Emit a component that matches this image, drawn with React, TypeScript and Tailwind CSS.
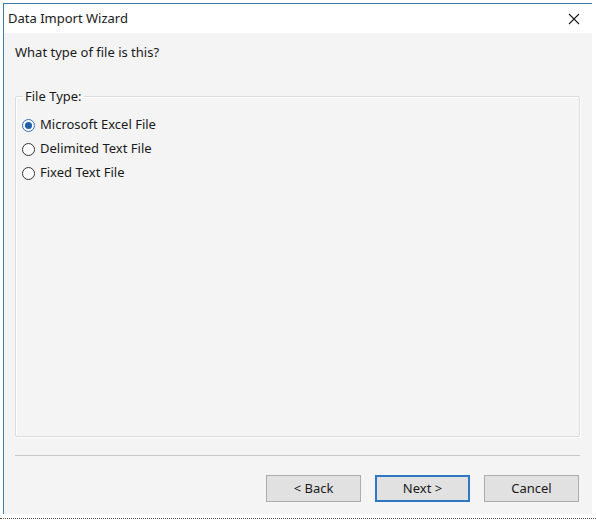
import { useState } from 'react';

const options = ['Microsoft Excel File', 'Delimited Text File', 'Fixed Text File'];

function Radio({ checked }: { checked: boolean }) {
  return (
    <span
      className={
        'flex h-[13px] w-[13px] shrink-0 items-center justify-center rounded-full border bg-white ' +
        (checked ? 'border-[#2f6fb8]' : 'border-[#333333]')
      }
    >
      {checked && <span className="h-[7px] w-[7px] rounded-full bg-[#1f5fa6]" />}
    </span>
  );
}

export default function App() {
  const [selected, setSelected] = useState(0);

  return (
    <div
      className="h-[525px] w-[596px] bg-white text-[13px] text-[#1a1a1a]"
      style={{ fontFamily: '"Noto Sans", "Noto Sans CJK KR", sans-serif' }}
    >
      <div className="border-b border-dotted border-[#555555] pb-[4px]">
        <div className="ml-[3px] mt-[3px] flex h-[511px] w-[589px] flex-col border-l border-t border-[#3c7fb1]">
          {/* Title bar */}
          <div className="flex h-[29px] items-center justify-between bg-white pl-[4px] pr-[12px]">
            <span className="text-[13px] leading-none">Data Import Wizard</span>
            <svg width="12" height="12" viewBox="0 0 12 12" className="text-[#1a1a1a]">
              <path d="M1 1L11 11M11 1L1 11" stroke="currentColor" strokeWidth="1.1" />
            </svg>
          </div>

          {/* Body */}
          <div className="flex flex-1 flex-col bg-[#f4f4f4] pl-[11px] pr-[12px]">
            <p className="mt-[11px] text-[13px] leading-[16px]">What type of file is this?</p>

            <fieldset className="mt-[29px] h-[348px] rounded-[2px] border border-[#dcdcdc] pl-[6px] pt-[10px] shadow-[inset_1px_1px_0_#ffffff,1px_1px_0_#ffffff]">
              <legend className="ml-[1px] px-[2px] text-[13px] leading-[14px]">File Type:</legend>
              <div className="flex flex-col">
                {options.map((o, i) => (
                  <label
                    key={o}
                    onClick={() => setSelected(i)}
                    className="flex h-[24px] cursor-default items-center gap-[5px] text-[13px]"
                  >
                    <Radio checked={selected === i} />
                    <span>{o}</span>
                  </label>
                ))}
              </div>
            </fieldset>

            <div className="mt-[18px] h-[2px] border-t border-[#c8c8c8] border-b-white" />

            <div className="mt-[18px] flex justify-end gap-[14px] pr-[1px]">
              <button className="h-[27px] w-[95px] border border-[#adadad] bg-[#e1e1e1] text-[13px]">
                &lt; Back
              </button>
              <button className="h-[27px] w-[95px] border-2 border-[#2f78c4] bg-[#e1e1e1] text-[13px]">
                Next &gt;
              </button>
              <button className="h-[27px] w-[95px] border border-[#adadad] bg-[#e1e1e1] text-[13px]">
                Cancel
              </button>
            </div>
          </div>
        </div>
      </div>
    </div>
  );
}
